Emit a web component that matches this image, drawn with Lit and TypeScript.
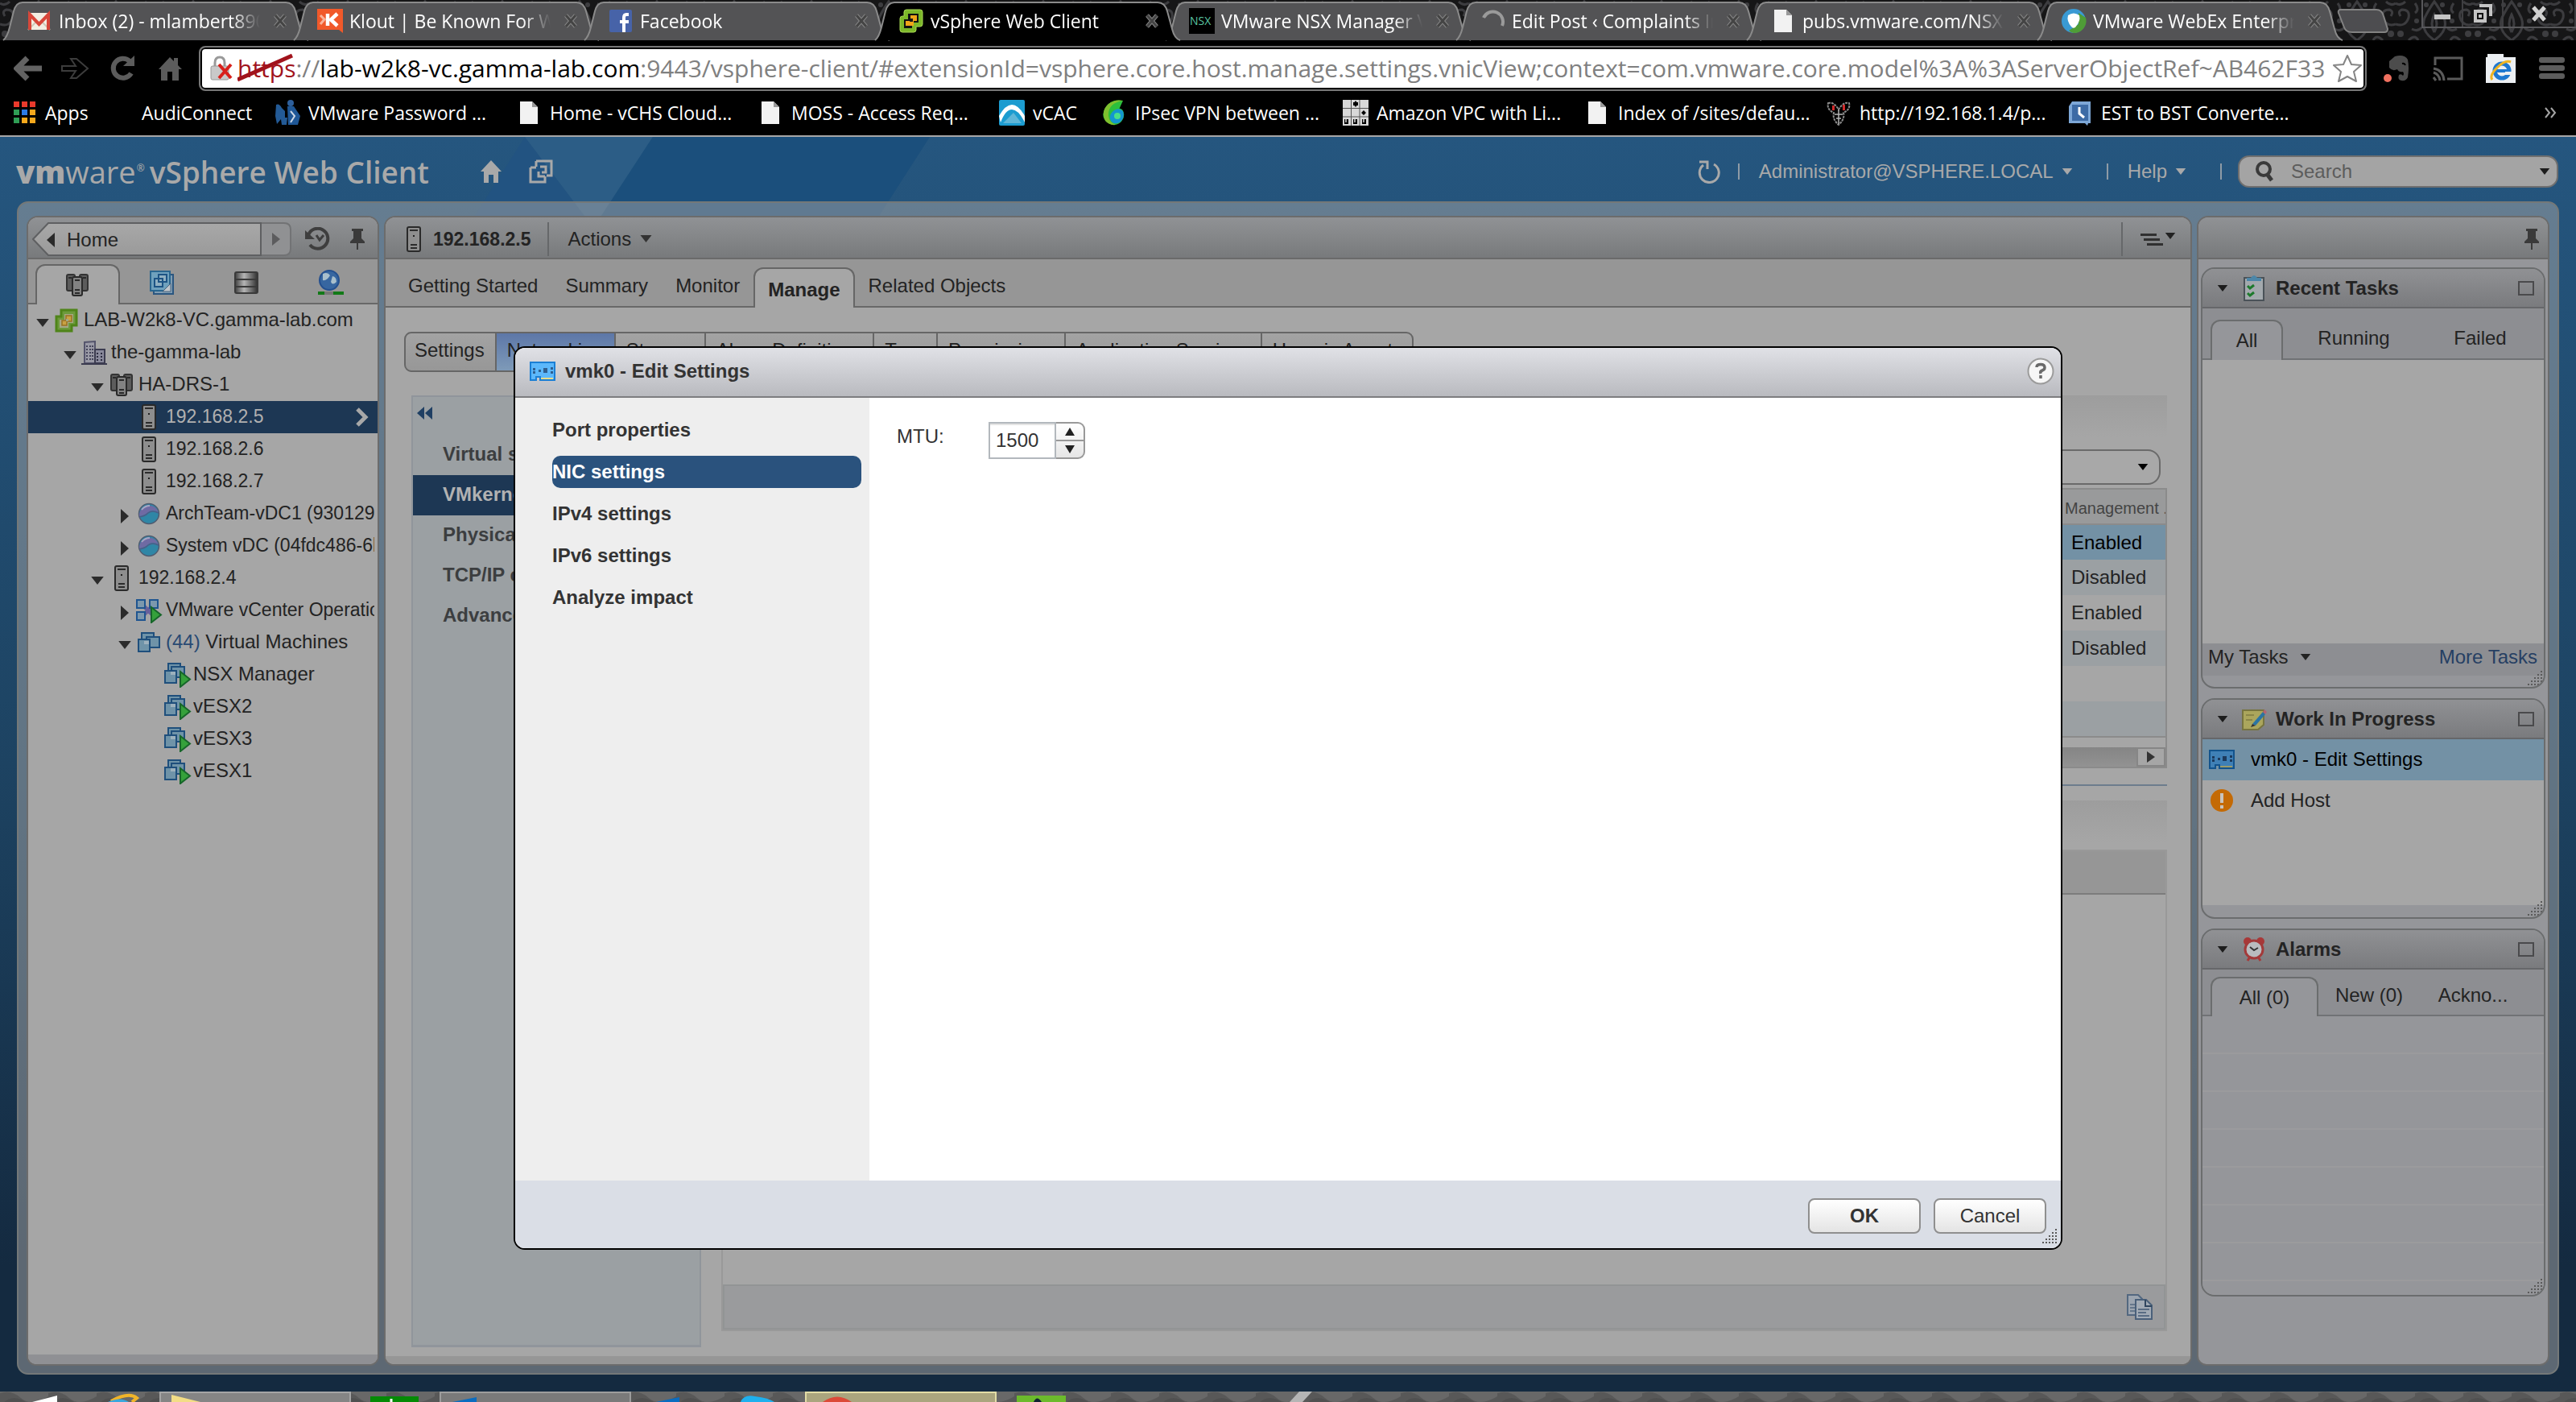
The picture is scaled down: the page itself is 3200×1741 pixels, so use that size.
import { LitElement, html, svg, css, nothing, SVGTemplateResult, TemplateResult } from "lit";
import { customElement, state } from "lit/decorators.js";
import { classMap } from "lit/directives/class-map.js";

const icon = (w: number, h: number, body: SVGTemplateResult, box = `0 0 ${w} ${h}`) =>
  html`<svg class="icon" width=${w} height=${h} viewBox=${box} aria-hidden="true">${body}</svg>`;

const caret = (w = 14, h = 9, fill = "currentColor") => icon(w, h, svg`<path d="M0 0H14L7 9Z" fill=${fill}/>`, "0 0 14 9");

/* ---------- browser icons ---------- */

const pageIcon = icon(32, 32, svg`
  <path d="M5 2H20L27 9V30H5Z" fill="#f2f2f2"/><path d="M20 2V9H27Z" fill="#9a9a9a"/>`);

const favicons: Record<string, TemplateResult> = {
  gmail: icon(32, 32, svg`
    <rect x="2" y="6" width="27" height="21" fill="#f3eee2"/><path d="M2 27L13 16M29 27L18 16" stroke="#cfc8b8" stroke-width="2"/>
    <path d="M4 27V8L15.500 20L27 8V27" fill="none" stroke="#d8473a" stroke-width="4"/>`),
  klout: icon(32, 32, svg`
    <path d="M0 1H32V31L27 27H0Z" fill="#f1592a"/>
    <path d="M4 9L9 14L4 20" fill="none" stroke="#f9b39a" stroke-width="3"/>
    <path d="M13 7V22M25 7L17 14.500L25 22" fill="none" stroke="#fff" stroke-width="4.500"/>`),
  facebook: icon(32, 32, svg`
    <rect x="2" y="2" width="28" height="28" rx="2" fill="#4763a8"/>
    <path d="M26 8H23Q20 8 20 12V30M15 17H26" fill="none" stroke="#fff" stroke-width="4"/>`),
  vsphere: icon(32, 32, svg`
    <path d="M10 2H27Q30 2 30 5V20Q30 23 27 23H22V27Q22 30 19 30H5Q2 30 2 27V13Q2 10 5 10H7V5Q7 2 10 2Z" fill="#7cb829" stroke="#a9d957" stroke-width="1"/>
    <path d="M12 7H25V18H17V25H7V14H12Z" fill="#111"/>
    <path d="M15 9H23V16H19V22H9V16H15Z" fill="#f0a519"/><path d="M15 13H18V17H14Z" fill="#1b1b1b"/>`),
  nsx: icon(32, 32, svg`
    <rect width="32" height="32" fill="#000"/>
    <text x="1" y="21" font-size="14" font-family="Open Sans, sans-serif" fill="#59c4a0">NSX</text>`),
  spinner: icon(32, 32, svg`<path d="M5 12A12 12 0 0 1 28 22" fill="none" stroke="#9a9a9a" stroke-width="4"/>`),
  page: pageIcon,
  webex: icon(32, 32, svg`
    <circle cx="16" cy="16" r="15" fill="#3a9ad4"/><path d="M16 31A15 15 0 0 0 31 12L22 6V20L10 28Q13 31 16 31Z" fill="#4f9d37"/>
    <path d="M9 9Q16 4 23 9Q25 16 18 24Q15 26 13 23Q7 16 9 9Z" fill="#fff"/>`),
  apps: icon(32, 32, svg`
    <g transform="translate(3 2)"><path d="M0 0H7V7H0ZM10 0H17V7H10ZM20 0H27V7H20Z" fill="#ea3a2c"/>
    <path d="M0 10H7V17H0ZM0 20H7V27H0Z" fill="#2f9e55"/><path d="M10 10H17V17H10Z" fill="#2c7be5"/>
    <path d="M20 10H27V17H20ZM10 20H17V27H10ZM20 20H27V27H20Z" fill="#f5a81c"/></g>`),
  blank: icon(32, 32, svg``),
  figures: icon(32, 32, svg`
    <path d="M2 6Q6 4 9 10L13 14V22H16L15 31H9L8 24L3 30L1 20Z" fill="#235a96"/>
    <circle cx="20" cy="4" r="4" fill="#2d5f9c"/><path d="M16 8H24L32 20L29 31H17Z" fill="#1f5796"/>
    <path d="M20 14L25 20L20 28" fill="none" stroke="#cdd8e6" stroke-width="2"/>`),
  vcac: icon(32, 32, svg`
    <rect width="32" height="32" rx="2" fill="#1c9cd0"/><path d="M0 20Q8 6 16 6T32 20V28Q24 12 16 12T2 28Z" fill="#fff"/>
    <path d="M5 29L18 16L28 29Z" fill="#5fb6d8"/>`),
  swirl: icon(32, 32, svg`
    <path d="M27 1Q12 -2 5 10Q-2 22 9 29Q18 34 25 27Q31 19 26 12Q20 8 16 13Q12 19 17 23" fill="#2bbf3c"/>
    <path d="M27 1Q8 4 9 20Q10 28 18 31Q10 32 5 26Q-1 14 9 5Q17 -1 27 1Z" fill="#7fc02e"/>
    <path d="M16 13Q22 9 27 14Q30 22 23 28Q14 32 11 24Q10 17 16 13Z" fill="#1496d0"/>
    <circle cx="20" cy="20" r="4" fill="#48e08a"/>`),
  grid: icon(32, 32, svg`
    <rect width="32" height="32" fill="#d8d8d8"/>
    <path d="M0 10.500H32M0 21H32M10.500 0V32M21 0V32" stroke="#555" stroke-width="1"/>
    <path d="M16 1L19 5L16 9L13 5ZM13 3H19V7H13ZM23 16L26 13L29 16L26 19Z" fill="#000"/>
    <path d="M2 24H7V30H2ZM13 24H18V30H13ZM24 24H29V30H24Z" fill="#000"/>
    <path d="M4 22V28M15 22V28M26 22V28" stroke="#d8d8d8" stroke-width="1.500"/>`),
  ornament: icon(32, 32, svg`
    <path d="M3 4Q10 2 16 12Q22 2 29 4Q31 12 22 16Q24 24 16 31Q8 24 10 16Q1 12 3 4Z" fill="none" stroke="#8a8a8a" stroke-width="2" stroke-dasharray="3 1"/>
    <path d="M16 12V30M11 18H21M13 23H19" stroke="#b5b5b5" stroke-width="1.500"/>
    <path d="M8 7H11V13H8ZM21 6H24V13H21Z" fill="#d02a2a"/>`),
  clock: icon(32, 32, svg`
    <path d="M6 2H29V29H26L25 32L22 29H2V8Z" fill="#7da7d6"/><rect x="6" y="6" width="20" height="20" fill="#3d6ba5"/>
    <path d="M15 9V17L21 22" fill="none" stroke="#fff" stroke-width="3"/>`),
};

/* ---------- inventory icons ---------- */

const hostIcon = icon(20, 34, svg`
  <rect x="2" y="2" width="16" height="30" rx="2" fill="#8e8e8e" stroke="#2a2a2a" stroke-width="2"/>
  <path d="M5 6H15M6 24H14M6 28H14" stroke="#2c2c2c" stroke-width="2"/><rect x="9" y="12" width="2" height="2" fill="#222"/>`);

const clusterIcon = icon(28, 30, svg`
  <rect x="1" y="2" width="10" height="20" rx="2" fill="#5c5c5c" stroke="#333" stroke-width="2"/>
  <rect x="17" y="2" width="10" height="20" rx="2" fill="#5c5c5c" stroke="#333" stroke-width="2"/>
  <rect x="8" y="5" width="12" height="23" rx="2" fill="#828282" stroke="#2a2a2a" stroke-width="2"/>
  <path d="M11 9H17M11 21H17M11 25H17M3 6H7M21 6H25" stroke="#2a2a2a" stroke-width="2"/>`);

const vcenterIcon = icon(30, 30, svg`
  <path d="M10 2H27V21H21V28H2V10H8V2Z" fill="#6d9a3c" stroke="#4f8419" stroke-width="3"/>
  <path d="M12 7H23V18H17V24H6V14H12Z" fill="#a5a886"/>
  <path d="M14 9H21V16H15V21H9V15H14Z" fill="#c9a244" stroke="#9a7220" stroke-width="1.500"/><path d="M14 13H17V16H14Z" fill="#a5a886"/>`);

const datacenterIcon = icon(32, 30, svg`
  <path d="M4 28V2L17 1V28Z" fill="#9a9aa6" stroke="#55556c" stroke-width="2"/>
  <path d="M17 28V11H29V28Z" fill="#8a8a9c" stroke="#3c3c50" stroke-width="2"/><path d="M0 29H32" stroke="#3c3c50" stroke-width="2"/>
  <path d="M7 6V24M11 6V24M14 6V24" stroke="#44445a" stroke-width="2" stroke-dasharray="2 2"/>
  <path d="M20 15V25M25 15V25" stroke="#2c2c40" stroke-width="2" stroke-dasharray="2 2"/>`);

const poolIcon = icon(28, 28, svg`
  <circle cx="14" cy="14" r="12.500" fill="#2f86a6" stroke="#505c70" stroke-width="1.500"/>
  <path d="M2 17Q9 16 13 12Q18 8 26 12A12.500 12.500 0 0 0 2 14Z" fill="#6f6aa3"/><path d="M2 18Q9 17 13 13Q18 9 26 13" fill="none" stroke="#4d5c86" stroke-width="1.500"/>
  <path d="M5 9Q9 4 15 4" fill="none" stroke="#a8a6c4" stroke-width="2"/>`);

const playMark = svg`<path d="M20 12L32 21.500L20 31Z" fill="#35a13b" stroke="#17662a" stroke-width="2"/>`;

const vmsIcon = icon(28, 28, svg`
  <g fill="#6f93a8" stroke="#1f4f7c" stroke-width="2"><rect x="5" y="2" width="15" height="14"/><rect x="11" y="7" width="16" height="13"/><rect x="1" y="10" width="14" height="15"/></g>
  <path d="M8 12H14V16H8Z" fill="#9db1bd"/>`);

const vmIcon = icon(34, 32, svg`
  <g fill="#6f93a8" stroke="#1f4f7c" stroke-width="2"><rect x="5" y="2" width="15" height="14"/><rect x="9" y="6" width="16" height="13"/><rect x="1" y="11" width="14" height="15"/></g>
  <path d="M8 12H14V16H8Z" fill="#9db1bd"/>${playMark}`);

const vappIcon = icon(34, 32, svg`
  <path d="M8 8L24 24M24 8L8 24" stroke="#67609b" stroke-width="5"/>
  <g fill="#7c98ad" stroke="#1f5590" stroke-width="2"><rect x="2" y="3" width="10" height="10"/><rect x="18" y="3" width="10" height="10"/><rect x="2" y="18" width="10" height="10"/></g>${playMark}`);

const templatesIcon = icon(32, 32, svg`
  <path d="M6 6H30V30H6Z" fill="#7f9cb2" stroke="#2b5680" stroke-width="2"/><path d="M2 2H26V26H2Z" fill="#6fa1bd" stroke="#2a668f" stroke-width="2"/>
  <path d="M12 6H22V15H12ZM7 11H17V21H7Z" fill="#8fb0c2" stroke="#1d5485" stroke-width="2"/><path d="M17 27L27 17V27Z" fill="#c1c6cb" stroke="#48637c"/>`);

const storageIcon = icon(30, 30, svg`
  <defs><linearGradient id="disk"><stop offset="0" stop-color="#3f3f3f"/><stop offset=".4" stop-color="#b5b5b5"/><stop offset="1" stop-color="#2f2f2f"/></linearGradient></defs>
  <rect x="1" y="2" width="28" height="26" rx="2" fill="url(#disk)" stroke="#3a3a3a" stroke-width="2"/>
  <path d="M2 11H28M2 20H28" stroke="#3a3a3a" stroke-width="2"/>`);

const networkIcon = icon(32, 32, svg`
  <circle cx="14" cy="13" r="12" fill="#3766a0" stroke="#24508f" stroke-width="2"/>
  <path d="M6 5Q12 2 15 7Q11 14 6 13ZM18 8Q23 9 23 15Q18 20 16 15Z" fill="#a9bfcc"/>
  <path d="M0 29H32" stroke="#127a17" stroke-width="4"/><path d="M8 29H19" stroke="#777" stroke-width="4"/>`);

const nicIcon = (dim: boolean) => icon(32, 24, svg`
  <path d="M1 1H31V23H13V19H8V23H1Z" fill=${dim ? "#3f80b6" : "#5cb8fb"} stroke=${dim ? "#12538c" : "#1b7fd4"} stroke-width="2"/>
  <path d="M4 8H7V11H4ZM4 12H7V15H4ZM11 10H14V13H11ZM17 8H22V14H17ZM26 7H29V10H26ZM26 12H29V15H26Z" fill=${dim ? "#1d3a5c" : "#2f5f8f"}/>
  <path d="M14 21H29" stroke=${dim ? "#9a9c6a" : "#e8dc8a"} stroke-width="2"/>`);

const pinIcon = icon(20, 28, svg`
  <path d="M3 1H17V4H15V13L19 17V19H1V17L5 13V4H3Z" fill="#3a3a3a"/><path d="M10 19V27" stroke="#3a3a3a" stroke-width="2"/>`);

const tasksIcon = icon(28, 34, svg`
  <rect x="2" y="4" width="24" height="28" fill="#a3a9ad" stroke="#4a5258" stroke-width="2"/>
  <path d="M5 8H23V4H18Q14 -2 10 4H5Z" fill="#4c86a8"/>
  <path d="M6 14L9 17L14 13M6 23L9 26L14 22" fill="none" stroke="#1d7a2c" stroke-width="3"/>`);

const notesIcon = icon(32, 30, svg`
  <path d="M2 4H28V22L21 28H2Z" fill="#aba65c" stroke="#77743f" stroke-width="2"/><path d="M6 10H16M6 16H14" stroke="#8a8648" stroke-width="2"/>
  <path d="M14 21L27 6L30 9L18 23Z" fill="#2b74a3"/><path d="M27 6L29 3L32 6L30 9Z" fill="#b56270"/><path d="M14 21L18 23L12 25Z" fill="#333"/>`);

const alarmIcon = icon(30, 32, svg`
  <circle cx="7" cy="6" r="5" fill="#a83838"/><circle cx="23" cy="6" r="5" fill="#a83838"/><path d="M7 30L10 25M23 30L20 25" stroke="#a83838" stroke-width="3"/>
  <circle cx="15" cy="16" r="11" fill="#b9bcbf" stroke="#a33a3a" stroke-width="3"/><path d="M10 13L15 17L20 14" fill="none" stroke="#333" stroke-width="2"/>`);

const warnIcon = icon(28, 28, svg`
  <circle cx="14" cy="14" r="14" fill="#c46a05"/><path d="M12 5H16V17H12ZM12 20H16V24H12Z" fill="#c9c4bd"/>`);

const grip = icon(20, 20, svg`
  <g fill="#5a5a5a"><path d="M17 1h2v2h-2zM13 5h2v2h-2zM17 5h2v2h-2zM9 9h2v2h-2zM13 9h2v2h-2zM17 9h2v2h-2zM5 13h2v2h-2zM9 13h2v2h-2zM13 13h2v2h-2zM17 13h2v2h-2zM1 17h2v2h-2zM5 17h2v2h-2zM9 17h2v2h-2zM13 17h2v2h-2zM17 17h2v2h-2z"/></g>`);

const copyIcon = icon(32, 32, svg`
  <path d="M1 1H14L19 6V26H1Z" fill="#9ca5b0" stroke="#536880" stroke-width="2"/><path d="M4 13H10M4 17H10M4 21H10" stroke="#66788c" stroke-width="2"/>
  <path d="M11 7H24L31 14V31H11Z" fill="#a2abb5" stroke="#4a607a" stroke-width="2"/><path d="M23 7V15H31" fill="none" stroke="#30465f" stroke-width="2"/>
  <path d="M14 19H28M14 23H24M14 27H28" stroke="#5a6d84" stroke-width="2"/>`);

/* ---------- data ---------- */

interface BrowserTab { icon: string; title: string; active?: boolean }
const browserTabs: BrowserTab[] = [
  { icon: "gmail", title: "Inbox (2) - mlambert890" },
  { icon: "klout", title: "Klout | Be Known For What" },
  { icon: "facebook", title: "Facebook" },
  { icon: "vsphere", title: "vSphere Web Client", active: true },
  { icon: "nsx", title: "VMware NSX Manager Vi" },
  { icon: "spinner", title: "Edit Post ‹ Complaints Inc" },
  { icon: "page", title: "pubs.vmware.com/NSX-6" },
  { icon: "webex", title: "VMware WebEx Enterprise" },
];

const bookmarks: [string, string][] = [
  ["apps", "Apps"], ["blank", "AudiConnect"], ["figures", "VMware Password ..."], ["page", "Home - vCHS Cloud..."],
  ["page", "MOSS - Access Req..."], ["vcac", "vCAC"], ["swirl", "IPsec VPN between ..."], ["grid", "Amazon VPC with Li..."],
  ["page", "Index of /sites/defau..."], ["ornament", "http://192.168.1.4/p..."], ["clock", "EST to BST Converte..."],
];

interface Node { level: number; open?: boolean; icon: TemplateResult; name: string; count?: string; selected?: boolean; snug?: boolean }
const inventory: Node[] = [
  { level: 0, open: true, icon: vcenterIcon, name: "LAB-W2k8-VC.gamma-lab.com" },
  { level: 1, open: true, icon: datacenterIcon, name: "the-gamma-lab" },
  { level: 2, open: true, icon: clusterIcon, name: "HA-DRS-1" },
  { level: 3, icon: hostIcon, name: "192.168.2.5", selected: true, snug: true },
  { level: 3, icon: hostIcon, name: "192.168.2.6", snug: true },
  { level: 3, icon: hostIcon, name: "192.168.2.7", snug: true },
  { level: 3, open: false, icon: poolIcon, name: "ArchTeam-vDC1 (930129", snug: true },
  { level: 3, open: false, icon: poolIcon, name: "System vDC (04fdc486-6b", snug: true },
  { level: 2, open: true, icon: hostIcon, name: "192.168.2.4", snug: true },
  { level: 3, open: false, icon: vappIcon, name: "VMware vCenter Operations", snug: true },
  { level: 3, open: true, icon: vmsIcon, name: "Virtual Machines", count: "(44)" },
  { level: 4, icon: vmIcon, name: "NSX Manager" },
  { level: 4, icon: vmIcon, name: "vESX2" },
  { level: 4, icon: vmIcon, name: "vESX3" },
  { level: 4, icon: vmIcon, name: "vESX1" },
];

const objectTabs = ["Getting Started", "Summary", "Monitor", "Manage", "Related Objects"];
const manageViews = ["Settings", "Networking", "Storage", "Alarm Definitions", "Tags", "Permissions", "Application Services", "Hyperic Agent"];
const networkingItems = ["Virtual switches", "VMkernel adapters", "Physical adapters", "TCP/IP configuration", "Advanced"];
const adapters: [string, string][] = [["vmk0", "Enabled"], ["vmk1", "Disabled"], ["vmk2", "Enabled"], ["vmk3", "Disabled"], ["", ""], ["", ""]];
const dialogPages = ["Port properties", "NIC settings", "IPv4 settings", "IPv6 settings", "Analyze impact"];

@customElement("app-root")
export class AppRoot extends LitElement {
  @state() private page = "NIC settings";
  @state() private mtu = 1500;

  static styles = css`
    :host { display: block; font: 24px/28px "Liberation Sans", Arial, sans-serif; color: #232323; }
    * { box-sizing: border-box; }
    button, input { font: inherit; color: inherit; background: none; border: 0; padding: 0; margin: 0; border-radius: 0; }
    button { cursor: pointer; white-space: nowrap; }
    a { color: inherit; text-decoration: none; }
    ul { list-style: none; margin: 0; padding: 0; }
    h1, h2, h3 { margin: 0; font: inherit; }
    .icon { display: block; flex: none; }
    .screen { min-height: 100vh; display: flex; flex-direction: column; background: #000; overflow: hidden; }
    .grow { flex: 1; min-width: 0; }

    /* browser */
    .browser { font-family: "Open Sans", "Noto Sans", sans-serif; color: #fff; }
    .strip { position: relative; height: 50px; display: flex; background: #161617; }
    .damask { position: absolute; inset: 0; width: 100%; height: 100%; }
    .btabs { display: flex; flex: 0 1 2904px; min-width: 0; padding-left: 4px; }
    .btab { position: relative; flex: 0 1 361px; min-width: 0; height: 50px; display: flex; align-items: center; gap: 8px; padding: 1px 7px 0 29px; font-size: 23px; }
    .btab-shape { position: absolute; left: 0; top: 2px; width: calc(100% + 18px); height: 48px; overflow: visible; }
    .btab-shape path { fill: #535355; stroke: #8b8b8b; stroke-width: 2; vector-effect: non-scaling-stroke; }
    .btab.active { z-index: 1; }
    .btab.active .btab-shape path { fill: #000; }
    .btab > .icon, .btab-title, .close { position: relative; }
    .btab-title { flex: 1; min-width: 0; margin-right: 7px; overflow: hidden; white-space: nowrap; text-align: left; line-height: 32px; mask-image: linear-gradient(90deg, #000 86%, transparent); }
    .close { width: 20px; height: 20px; }
    .newtab { position: relative; align-self: flex-start; margin-top: 10px; }
    .winbtns { position: relative; margin-left: auto; display: flex; height: 35px; border: solid #58585b; border-width: 0 0 2px 2px; }
    .winbtns button { width: 50px; display: grid; place-items: center; border-right: 2px solid #3f3f42; }
    .winbtns button:last-child { width: 90px; }
    .bar { height: 63px; display: flex; align-items: center; padding: 7px 14px 0 17px; background: #000; }
    .bar nav { display: flex; gap: 23px; width: 230px; }
    .omni { flex: 1; min-width: 0; height: 56px; display: flex; align-items: center; gap: 6px; padding: 0 4px 0 12px; border: 2px solid #777; outline: 2px solid #000; outline-offset: -4px; border-radius: 8px; background: #fff; color: #808080; font-size: 30px; line-height: 44px; }
    .url { flex: 1; min-width: 0; overflow: hidden; white-space: nowrap; }
    .scheme { position: relative; display: inline-block; color: #a1131c; }
    .slash { position: absolute; left: -2px; top: 2px; width: 74px; height: 38px; }
    .domain { color: #000; }
    .exts { display: flex; align-items: center; gap: 28px; padding-left: 20px; }
    .marks { height: 57px; display: grid; grid-template-columns: 120px 207px 300px 300px 300px 127px 300px 300px 300px 300px 300px 1fr; align-items: center; padding: 0 24px 2px 14px; border-bottom: 2px solid #a7a7a7; font-size: 23px; }
    .mark { display: flex; align-items: center; gap: 10px; min-width: 0; white-space: nowrap; overflow: hidden; }
    .more { justify-self: end; }

    /* vSphere client */
    .client { position: relative; flex: 1; display: flex; flex-direction: column; background: linear-gradient(#25567f, #1d4362 50%, #142a40 90%); }
    .facets { position: absolute; inset: 0 auto auto 0; width: 1400px; height: 98px; }
    .top { position: relative; height: 80px; display: flex; align-items: center; padding: 6px 22px 0 20px; color: #a9a9a9; }
    .brand { display: flex; align-items: baseline; font: 600 37px/44px "Open Sans", sans-serif; }
    .brand .vm { font-weight: 800; font-size: 38px; }
    .brand .ware { font-weight: 400; font-size: 38px; }
    .brand sup { font-size: 12px; line-height: 12px; align-self: flex-start; padding: 12px 6px 0 1px; }
    .top-links { display: flex; gap: 34px; padding-left: 64px; }
    .session { display: flex; align-items: center; margin-left: auto; }
    .session button { display: flex; align-items: center; gap: 10px; }
    .rule { width: 2px; height: 20px; background: #8f9ba6; margin: 0 24px 0 22px; }
    .rule.far { margin-left: 42px; }
    .search { display: flex; align-items: center; width: 398px; height: 40px; gap: 22px; padding: 0 8px 0 18px; border: 2px solid #6f6f6f; border-radius: 14px; background: #a4a4a4; color: #303030; margin-left: -4px; }
    .search input { flex: 1; min-width: 0; outline: 0; }
    .search input::placeholder { color: #5c5c5c; opacity: 1; }

    .frame { position: relative; flex: 1; display: grid; grid-template-columns: 438px minmax(0, 1fr) 438px; gap: 6px; margin: 0 21px 21px; padding: 16px 10px 9px; border: 2px solid #747878; border-radius: 14px; background: rgba(165, 165, 165, 0.5); }
    .panel { display: flex; flex-direction: column; min-width: 0; border: 2px solid #6c6c6c; border-radius: 14px 14px 12px 12px; background: #a6a6a6; overflow: hidden; }
    .phead { flex: none; height: 52px; display: flex; align-items: center; padding-top: 3px; border-bottom: 2px solid #6a6a6a; background: linear-gradient(#909295, #787a7c); }
    .pfoot { flex: none; height: 12px; margin-top: auto; background: #8f9094; }
    main .pfoot { height: 10px; background: #969696; }
    .tabs { display: flex; align-items: flex-end; border-bottom: 2px solid #686868; background: #969696; }
    .tab.active { margin-bottom: -2px; border: 2px solid #666; border-bottom: 0; border-radius: 12px 12px 0 0; background: #a6a6a6; }

    .crumb { position: relative; display: flex; align-items: center; width: 322px; height: 42px; margin-left: 5px; }
    .crumb-shape { position: absolute; inset: 0; width: 322px; height: 42px; }
    .crumb button { position: relative; display: flex; align-items: center; gap: 15px; }
    .crumb .home { width: 284px; padding: 2px 0 0 18px; }
    .crumb .next { width: 38px; justify-content: center; }
    .tools { display: flex; align-items: center; gap: 22px; padding-left: 16px; }
    .inv-tabs { height: 56px; padding-left: 9px; }
    .inv-tabs .tab { width: 105px; height: 50px; display: grid; place-items: center; padding-right: 2px; }
    .row { height: 40px; display: flex; align-items: center; gap: 6px; white-space: nowrap; overflow: hidden; margin-right: 4px; }
    .lv0 { padding-left: 9px; } .lv1 { padding-left: 43px; } .lv2 { padding-left: 77px; } .lv3 { padding-left: 111px; } .lv4 { padding-left: 145px; }
    .row.selected { background: #1d3754; color: #b0b0b0; margin-right: 0; padding-right: 10px; }
    .twist { flex: none; width: 18px; display: grid; place-items: center; padding-top: 6px; color: #2b2b2b; }
    .slot { flex: none; width: 30px; height: 32px; display: flex; align-items: center; justify-content: center; }
    .lv4 .slot { justify-content: flex-start; }
    .name { display: block; overflow: hidden; padding-bottom: 3px; }
    .snug { font-size: 23px; }
    .count { color: #294a73; }
    .chev { margin-left: auto; }

    .title { font-weight: bold; font-size: 24px; }
    .host { gap: 14px; padding-left: 25px; }
    .host .title { font-size: 23px; padding-right: 6px; }
    .vline { width: 2px; height: 42px; background: #66686a; }
    .actions { display: flex; align-items: center; gap: 11px; padding-left: 10px; }
    .listbtn { display: flex; align-items: flex-start; gap: 2px; padding: 0 18px 0 8px; }
    .obj-tabs { height: 60px; padding-left: 11px; }
    .obj-tabs .tab { height: 50px; padding: 0 17px; }
    .obj-tabs .tab.active { padding: 4px 16px 0; font-weight: bold; }
    .segs { display: flex; align-self: flex-start; margin: 30px 0 0 23px; height: 50px; border: 2px solid #666; border-radius: 9px; background: linear-gradient(#a3a3a3, #979797); overflow: hidden; }
    .segs button { padding: 0 13px 4px; border-left: 2px solid #666; }
    .segs button:first-child { border-left: 0; padding-left: 11px; }
    .segs button:last-child { padding-right: 24px; }
    .segs .on { background: linear-gradient(#5d77a8, #7e9ab8); }
    .work { flex: 1; display: grid; grid-template-columns: 360px minmax(0, 1fr); gap: 25px; padding: 29px 29px 11px 32px; }
    .subnav { border: 2px solid #90959b; border-bottom-width: 3px; background: #9ba0a3; font-weight: bold; color: #3c3e40; }
    .subnav .fold { display: block; padding: 0 0 7px 5px; height: 47px; color: #1f3f63; }
    .subnav li button { display: block; width: 100%; height: 50px; text-align: left; padding: 0 0 3px 37px; }
    .subnav .on { background: #1d3754; color: #b2b2b2; }
    .detail { display: flex; flex-direction: column; padding-bottom: 20px; }
    .fade { flex: none; height: 52px; background: linear-gradient(#9d9d9d, #a6a6a6); }
    .filter { align-self: flex-end; display: flex; align-items: center; width: 420px; height: 44px; margin: 15px 8px 4px; padding: 0 12px; border: 2px solid #6a6a6a; border-radius: 16px; background: #a8a8a8; color: #000; }
    .filter input { flex: 1; min-width: 0; }
    .grid { width: 100%; table-layout: fixed; border-collapse: collapse; border: 2px solid #8b8b8b; }
    .grid th { height: 44px; padding: 3px 0 0 6px; font-weight: normal; font-size: 20px; text-align: left; white-space: nowrap; overflow: hidden; color: #444; background: #999a9b; border-bottom: 2px solid #8b8b8b; }
    .grid td { height: 44px; padding: 0 0 0 14px; }
    .grid th:last-child { width: 132px; }
    .grid tr:nth-child(even) td { background: #9ba0a3; }
    .grid tr.on td { background: #7391a5; color: #000; }
    .hscroll { height: 38px; padding-top: 12px; border: solid #8b8b8b; border-width: 0 2px 2px; display: flex; justify-content: flex-end; background: linear-gradient(#a6a6a6 12px, #858585 12px, #929292); }
    .hscroll button { width: 36px; display: grid; place-items: center; background: #a6a6a6; border: 2px solid #868686; }
    .detail hr { width: 100%; height: 2px; border: 0; margin: 20px 0 18px; background: #6d7d8d; }
    .props { flex: 1; display: flex; flex-direction: column; margin-top: 9px; border: 2px solid #999; }
    .props-head { height: 54px; background: #969696; border-bottom: 2px solid #7c7c7c; }
    .props-foot { margin-top: auto; height: 56px; display: flex; align-items: center; justify-content: flex-end; padding-right: 14px; border: 2px solid #929495; background: #9a9b9d; }

    .side { background: #95969a; }
    .side .phead { justify-content: flex-end; padding-right: 10px; }
    .cards { display: flex; flex-direction: column; gap: 12px; padding: 10px 3px; }
    .card { position: relative; display: flex; flex-direction: column; border: 2px solid #6b6d6e; border-radius: 17px; background: #95969a; overflow: hidden; }
    .chead { flex: none; height: 49px; display: flex; align-items: center; border-bottom: 2px solid #66676a; background: linear-gradient(#909194, #7a7b7e); padding: 0 12px 0 18px; }
    .chead .slot { width: 34px; margin: 0 10px 0 15px; }
    .card .tabs { background: #8d8e92; border-color: #707275; }
    .card .tab.active { background: #95969a; border-color: #6b6d6e; }
    .card .grip { position: absolute; right: 1px; bottom: 1px; }
    .t-tabs { height: 64px; padding-left: 10px; }
    .t-tabs .tab { height: 50px; }
    .t-tabs .all { width: 90px; } .t-tabs .running { width: 176px; } .t-tabs .failed { width: 138px; }
    .t-body { height: 352px; background: #a6a6a6; }
    .t-foot { height: 40px; margin-bottom: 14px; display: flex; align-items: center; justify-content: space-between; padding: 0 8px 6px 7px; background: #8d8e92; }
    .t-foot button { display: flex; align-items: center; gap: 14px; }
    .t-foot a { color: #263f63; }
    .w-body { height: 206px; margin-bottom: 15px; background: #a6a6a6; }
    .w-body a { display: flex; align-items: center; gap: 20px; height: 51px; padding: 0 0 2px 8px; }
    .w-body .slot { width: 32px; }
    .w-body .on { background: #7391a5; color: #000; }
    .a-tabs { height: 58px; padding-left: 10px; }
    .a-tabs .tab { height: 49px; }
    .a-tabs .all { width: 134px; } .a-tabs .new { width: 126px; } .a-tabs .ack { width: 132px; }
    .a-body { height: 346px; background: repeating-linear-gradient(#95969a 0 45px, #9b9b9d 45px 47px); }

    /* dialog */
    .modal { position: absolute; inset: 0; display: flex; justify-content: center; align-items: flex-start; padding-top: 260px; }
    .dialog { display: flex; flex-direction: column; width: 1924px; max-width: 90%; height: 1122px; border: 2px solid #000; border-radius: 14px; background: #fff; color: #333; overflow: hidden; }
    .dhead { height: 62px; display: flex; align-items: center; gap: 12px; padding: 0 8px 2px 18px; border-bottom: 2px solid #7d7d80; background: linear-gradient(#e0e1e6, #b9babf); }
    .dhead .title { flex: 1; }
    .dbody { flex: 1; display: grid; grid-template-columns: 440px 1fr; }
    .pages { display: flex; flex-direction: column; gap: 12px; padding: 20px 10px 20px 46px; background: #eee; font-weight: bold; }
    .pages button { display: block; width: 100%; height: 40px; text-align: left; border-radius: 10px; }
    .pages .on { background: #2a527d; color: #fff; }
    .form { display: flex; align-items: flex-start; padding: 30px 34px; }
    .form label { width: 114px; padding-top: 4px; }
    .num { width: 84px; height: 46px; padding-left: 7px; border: 2px solid #b3b8bd; background: #fff; box-shadow: inset 0 2px 0 #e4e4e4; }
    .spin { display: flex; flex-direction: column; width: 36px; height: 46px; border: 2px solid #999; border-left: 0; border-radius: 0 9px 9px 0; background: linear-gradient(#fff, #e6e6e6); }
    .spin button { flex: 1; display: grid; place-items: center; }
    .spin button + button { border-top: 2px solid #999; }
    .dfoot { position: relative; height: 84px; display: flex; justify-content: flex-end; align-items: center; gap: 16px; padding: 4px 18px 0; background: #dadee6; }
    .btn { width: 140px; height: 44px; border: 2px solid #8f8f8f; border-radius: 8px; background: linear-gradient(#fff, #e4e4e4); }
    .btn.ok { font-weight: bold; }
    .dfoot .grip { position: absolute; right: 4px; bottom: 5px; }

    .taskbar { flex: none; height: 13px; position: relative; overflow: hidden; background: #585858; }
    .taskbar svg { display: block; }
  `;

  private browser() {
    const close = icon(20, 20, svg`<path d="M4 3L16 17M16 3L4 17" stroke="#858585" stroke-width="5"/><path d="M4 3L16 17M16 3L4 17" stroke="#444" stroke-width="3"/>`);
    return html`<header class="browser">
      <div class="strip">
        <svg class="damask" aria-hidden="true">
          <defs><pattern id="dm" width="96" height="50" patternUnits="userSpaceOnUse">
            <g fill="none" stroke="#3c3c3f" stroke-width="3">
              <path d="M48 50Q30 38 36 22Q42 10 48 2Q54 10 60 22Q66 38 48 50M48 40Q42 30 48 18Q54 30 48 40"/>
              <path d="M0 30Q12 34 16 22Q18 12 8 12Q2 14 6 20M96 30Q84 34 80 22Q78 12 88 12Q94 14 90 20"/>
              <path d="M16 50Q24 42 28 50M80 50Q72 42 68 50M24 4Q30 12 24 16M72 4Q66 12 72 16"/>
              <path d="M20 36Q28 40 32 34M76 36Q68 40 64 34M0 4Q6 8 12 2M96 4Q90 8 84 2"/></g>
            <g fill="#3d3d40"><circle cx="6" cy="42" r="4"/><circle cx="90" cy="42" r="4"/><circle cx="26" cy="26" r="3"/><circle cx="70" cy="26" r="3"/><circle cx="38" cy="6" r="3"/><circle cx="58" cy="6" r="3"/></g>
          </pattern></defs>
          <rect width="100%" height="100%" fill="url(#dm)"/>
        </svg>
        <div class="btabs" role="tablist" aria-label="Browser tabs">
          ${browserTabs.map((t) => html`<div class=${classMap({ btab: true, active: !!t.active })} role="tab" aria-selected=${t.active ? "true" : "false"}>
            <svg class="btab-shape" viewBox="0 0 380 48" preserveAspectRatio="none" aria-hidden="true">
              <path d="M0 48Q5 44 8 32L13 12Q16 1 24 1H352Q361 1 364 12L370 34Q373 46 380 48"/></svg>
            ${favicons[t.icon]}<span class="btab-title">${t.title}</span><button class="close" aria-label="Close tab">${close}</button>
          </div>`)}
        </div>
        <button class="newtab" aria-label="New tab">${icon(64, 32, svg`<path d="M2 2H48Q55 2 57 10L62 26Q62 30 58 30H18Q10 30 8 24L1 6Q0 2 4 2Z" fill="#4d4d50" stroke="#828282" stroke-width="2"/>`)}</button>
        <div class="winbtns">
          <button aria-label="Minimize">${icon(20, 20, svg`<path d="M0 11H20V17H0Z" fill="#c4c4c4"/>`)}</button>
          <button aria-label="Restore">${icon(24, 24, svg`<path d="M8 2H22V15" fill="none" stroke="#c4c4c4" stroke-width="4"/><path d="M3 9H15V21H3Z" fill="#111" stroke="#c4c4c4" stroke-width="4"/><rect x="7" y="13" width="4" height="4" fill="#c4c4c4"/>`)}</button>
          <button aria-label="Close">${icon(20, 20, svg`<path d="M3 2L17 18M17 2L3 18" stroke="#d0d0d0" stroke-width="5"/>`)}</button>
        </div>
      </div>
      <div class="bar">
        <nav aria-label="Browser navigation">
          <button aria-label="Back">${icon(36, 32, svg`<path d="M17 3L4 16L17 29M5 16H35" fill="none" stroke="#636363" stroke-width="7"/>`)}</button>
          <button aria-label="Forward">${icon(36, 32, svg`<path d="M1 13H18L12 4H19L33 16L19 28H12L18 19H1Z" fill="#000" stroke="#3c3c3c" stroke-width="2"/>`)}</button>
          <button aria-label="Reload">${icon(36, 32, svg`<path d="M28 22A12 12 0 1 1 26 7" fill="none" stroke="#5c5c5c" stroke-width="6"/><path d="M18 13H32V0Z" fill="#5c5c5c"/>`)}</button>
          <button aria-label="Home page">${icon(36, 32, svg`<path d="M3 17L17 2L22 7V3H27V12L32 17H28V31H20V20H14V31H6V17Z" fill="#5c5c5c"/>`)}</button>
        </nav>
        <div class="omni">
          ${icon(28, 32, svg`<path d="M6 14V9Q6 2 12 2T18 9V14" fill="none" stroke="#9a9a9a" stroke-width="3"/><rect x="1" y="13" width="22" height="17" rx="2" fill="#c9c9c9" stroke="#999"/><path d="M11 11L26 28M26 11L11 28" stroke="#d8201b" stroke-width="4"/>`)}
          <div class="url"><span class="scheme">https<svg class="slash" viewBox="0 0 74 38" aria-hidden="true"><path d="M2 34L70 4" stroke="#a1131c" stroke-width="5"/></svg></span>://<span class="domain">lab-w2k8-vc.gamma-lab.com</span>:9443/vsphere-client/#extensionId=vsphere.core.host.manage.settings.vnicView;context=com.vmware.core.model%3A%3AServerObjectRef~AB462F33</div>
          <button aria-label="Bookmark this page">${icon(36, 36, svg`<path d="M18 2L23 13L35 14L26 22L29 34L18 28L7 34L10 22L1 14L13 13Z" fill="#fff" stroke="#848484" stroke-width="2" stroke-linejoin="round"/>`)}</button>
        </div>
        <div class="exts">
          <button aria-label="Evernote">${icon(34, 36, svg`<path d="M8 9L15 3Q27 0 31 7Q33 17 31 29Q29 34 23 33Q18 32 20 26Q23 24 25 27Q27 25 25 22Q20 23 18 19Q12 22 8 17Z" fill="#4c4c4c"/><path d="M24 12Q27 11 28 14" fill="none" stroke="#000" stroke-width="2"/><circle cx="6" cy="30" r="5" fill="#f0705f"/>`)}</button>
          <button aria-label="Cast">${icon(38, 32, svg`<path d="M3 12V3H36V29H18" fill="none" stroke="#5a5a5a" stroke-width="3"/><path d="M1 16Q13 18 14 31M1 21Q8 23 9 31M1 27L4 31" fill="none" stroke="#5a5a5a" stroke-width="3"/>`)}</button>
          <button aria-label="IE Tab">${icon(38, 38, svg`<path d="M2 1H22V5H37V37H0V5H2Z" fill="#eceff2"/><circle cx="20" cy="22" r="9" fill="none" stroke="#1e78d0" stroke-width="5"/><path d="M12 22H28" stroke="#1e78d0" stroke-width="4"/><path d="M24 25H32" stroke="#eceff2" stroke-width="4"/><path d="M8 33Q4 28 14 18T31 11" fill="none" stroke="#eeb422" stroke-width="3"/>`)}</button>
          <button aria-label="Menu">${icon(32, 32, svg`<g fill="#5c5c5c"><rect y="2" width="32" height="7" rx="3"/><rect y="12" width="32" height="7" rx="3"/><rect y="22" width="32" height="7" rx="3"/></g>`)}</button>
        </div>
      </div>
      <nav class="marks" aria-label="Bookmarks">
        ${bookmarks.map(([i, t]) => html`<a class="mark" href="#">${favicons[i]}<span>${t}</span></a>`)}
        <button class="more" aria-label="More bookmarks">${icon(16, 16, svg`<path d="M2 2L7 8L2 14M9 2L14 8L9 14" fill="none" stroke="#a5a5a5" stroke-width="2"/>`)}</button>
      </nav>
    </header>`;
  }

  private top() {
    return html`<header class="top">
      <h1 class="brand"><span class="vm">vm</span><span class="ware">ware</span><sup>®</sup><span>vSphere Web Client</span></h1>
      <nav class="top-links">
        <a href="#" aria-label="Home">${icon(26, 30, svg`<path d="M13 1L26 15H22V29H16V19H10V29H4V15H0Z" fill="#a9a9a9"/>`)}</a>
        <a href="#" aria-label="Links">${icon(30, 30, svg`<g fill="none" stroke="#a9a9a9" stroke-width="3"><path d="M9 2H28V20H22M9 2V9M2 10H9M2 10V28H20V21M20 21H12V15M14 9H21V16H16"/></g>`)}</a>
      </nav>
      <div class="session">
        <button aria-label="Refresh">${icon(28, 30, svg`<path d="M20 6A12 12 0 1 1 7 7" fill="none" stroke="#a9a9a9" stroke-width="3"/><path d="M2 3H12V12" fill="none" stroke="#a9a9a9" stroke-width="3"/>`)}</button>
        <span class="rule"></span>
        <button>Administrator@VSPHERE.LOCAL ${caret(14, 8)}</button>
        <span class="rule far"></span>
        <button>Help ${caret(14, 8)}</button>
        <span class="rule far"></span>
        <div class="search">${icon(24, 26, svg`<circle cx="12" cy="10" r="8" fill="none" stroke="#3a3a3a" stroke-width="4"/><path d="M16 16L22 24" stroke="#3a3a3a" stroke-width="5"/>`)}
          <input type="search" placeholder="Search" aria-label="Search">${caret(14, 8, "#1c1c1c")}</div>
      </div>
    </header>`;
  }

  private navigator() {
    return html`<aside class="panel" aria-label="Navigator">
      <div class="phead">
        <div class="crumb">
          <svg class="crumb-shape" viewBox="0 0 322 42" aria-hidden="true">
            <defs><linearGradient id="cr" x2="0" y2="1"><stop offset="0" stop-color="#a8a8a8"/><stop offset="1" stop-color="#9a9a9a"/></linearGradient></defs>
            <path d="M284 1H313Q321 1 321 9V33Q321 41 313 41H284" fill="#909193" stroke="#727375" stroke-width="2"/>
            <path d="M20 1H284V41H20L1 21Z" fill="url(#cr)" stroke="#5f6062" stroke-width="2"/></svg>
          <button class="home">${icon(10, 18, svg`<path d="M10 0V18L0 9Z" fill="#2a2a2a"/>`)}Home</button>
          <button class="next" aria-label="Forward">${icon(10, 16, svg`<path d="M0 0V16L10 8Z" fill="#5c5c5e"/>`)}</button>
        </div>
        <div class="tools">
          <button aria-label="History">${icon(34, 30, svg`<path d="M5 10A12.500 12.500 0 1 1 7 22" fill="none" stroke="#3e3e3e" stroke-width="4"/><path d="M1 4V15H13Z" fill="#3e3e3e"/><path d="M15 10L19 16L24 10" fill="none" stroke="#3e3e3e" stroke-width="3"/>`)}</button>
          <button aria-label="Pin">${pinIcon}</button>
        </div>
      </div>
      <div class="tabs inv-tabs" role="tablist">
        <button class="tab active" role="tab" aria-label="Hosts and Clusters">${clusterIcon}</button>
        <button class="tab" role="tab" aria-label="VMs and Templates">${templatesIcon}</button>
        <button class="tab" role="tab" aria-label="Storage">${storageIcon}</button>
        <button class="tab" role="tab" aria-label="Networking">${networkIcon}</button>
      </div>
      <ul role="tree">
        ${inventory.map((n) => html`<li role="treeitem" aria-selected=${n.selected ? "true" : "false"} class="row lv${n.level} ${n.selected ? "selected" : ""}">
          <span class="twist">${n.open === undefined ? nothing : n.open ? caret(18, 10) : icon(10, 18, svg`<path d="M0 0V18L10 9Z" fill="#2b2b2b"/>`)}</span>
          <span class="slot">${n.icon}</span>
          <span class=${classMap({ name: true, snug: !!n.snug })}>${n.count ? html`<span class="count">${n.count}</span> ` : nothing}${n.name}</span>
          ${n.selected ? html`<span class="chev">${icon(18, 24, svg`<path d="M3 2L13 12L3 22" fill="none" stroke="#a8a8a8" stroke-width="5"/>`)}</span>` : nothing}
        </li>`)}
      </ul>
      <div class="pfoot"></div>
    </aside>`;
  }

  private main() {
    return html`<main class="panel">
      <div class="phead host">${hostIcon}<h2 class="title">192.168.2.5</h2>
        <span class="vline"></span>
        <button class="actions">Actions ${caret(15, 9, "#333")}</button>
        <span class="grow"></span><span class="vline"></span>
        <button class="listbtn" aria-label="View options">${icon(28, 16, svg`<path d="M0 1H20V4H0ZM4 7H24V10H4ZM8 13H28V16H8Z" fill="#303030"/>`)}${caret(14, 8, "#222")}</button>
      </div>
      <div class="tabs obj-tabs" role="tablist">
        ${objectTabs.map((t) => html`<button role="tab" class=${classMap({ tab: true, active: t === "Manage" })}>${t}</button>`)}
      </div>
      <div class="segs">${manageViews.map((t) => html`<button class=${classMap({ on: t === "Networking" })}>${t}</button>`)}</div>
      <div class="work">
        <nav class="subnav">
          <button class="fold" aria-label="Collapse">${icon(20, 16, svg`<path d="M9 0V16L0 8ZM19 0V16L10 8Z" fill="currentColor"/>`)}</button>
          <ul>${networkingItems.map((t) => html`<li><button class=${classMap({ on: t === "VMkernel adapters" })}>${t}</button></li>`)}</ul>
        </nav>
        <section class="detail">
          <div class="fade"></div>
          <div class="filter"><input type="text" aria-label="Filter">${caret(16, 8)}</div>
          <table class="grid">
            <thead><tr><th>Device</th><th>Management ...</th></tr></thead>
            <tbody>${adapters.map(([d, m], i) => html`<tr class=${i === 0 ? "on" : ""}><td>${d}</td><td>${m}</td></tr>`)}</tbody>
          </table>
          <div class="hscroll"><button aria-label="Scroll right">${icon(10, 14, svg`<path d="M0 0V14L10 7Z" fill="#333"/>`)}</button></div>
          <hr>
          <div class="fade"></div>
          <div class="props"><div class="props-head"></div><div class="props-foot"><button aria-label="Copy">${copyIcon}</button></div></div>
        </section>
      </div>
      <div class="pfoot"></div>
    </main>`;
  }

  private card(name: string, pic: TemplateResult, body: TemplateResult) {
    return html`<section class="card">
      <div class="chead">${caret(14, 8, "#1c1c1c")}<span class="slot">${pic}</span><h3 class="title grow">${name}</h3>
        <button aria-label="Maximize ${name}">${icon(20, 18, svg`<rect x="1" y="1" width="18" height="16" fill="none" stroke="#4a4a4c" stroke-width="2"/>`)}</button></div>
      ${body}<span class="grip">${grip}</span>
    </section>`;
  }

  private side() {
    return html`<aside class="panel side">
      <div class="phead"><button aria-label="Pin sidebar">${pinIcon}</button></div>
      <div class="cards">
        ${this.card("Recent Tasks", tasksIcon, html`
          <div class="tabs t-tabs" role="tablist"><button class="tab all active" role="tab">All</button><button class="tab running" role="tab">Running</button><button class="tab failed" role="tab">Failed</button></div>
          <div class="t-body"></div>
          <div class="t-foot"><button>My Tasks ${caret(14, 8)}</button><a href="#">More Tasks</a></div>`)}
        ${this.card("Work In Progress", notesIcon, html`
          <div class="w-body"><a class="on" href="#"><span class="slot">${nicIcon(true)}</span>vmk0 - Edit Settings</a>
          <a href="#"><span class="slot">${warnIcon}</span>Add Host</a></div>`)}
        ${this.card("Alarms", alarmIcon, html`
          <div class="tabs a-tabs" role="tablist"><button class="tab all active" role="tab">All (0)</button><button class="tab new" role="tab">New (0)</button><button class="tab ack" role="tab">Ackno...</button></div>
          <div class="a-body"></div>`)}
      </div>
    </aside>`;
  }

  private dialog() {
    return html`<div class="modal"><section class="dialog" role="dialog" aria-labelledby="dlg">
      <div class="dhead">${nicIcon(false)}<h2 class="title" id="dlg">vmk0 - Edit Settings</h2>
        <button aria-label="Help">${icon(34, 34, svg`<circle cx="17" cy="17" r="15.500" fill="#f6f6f6" stroke="#9b9b9b" stroke-width="2"/><path d="M12 12Q12 8.500 17 8.500T22 12.500Q22 15 19 16T17 20M17 22V26" fill="none" stroke="#6a6a6a" stroke-width="3.500"/>`)}</button></div>
      <div class="dbody">
        <nav class="pages">${dialogPages.map((p) => html`<button class=${classMap({ on: p === this.page })} @click=${() => (this.page = p)}>${p}</button>`)}</nav>
        <div class="form"><label for="mtu">MTU:</label>
          <input id="mtu" class="num" type="text" inputmode="numeric" .value=${String(this.mtu)}>
          <span class="spin">
            <button aria-label="Increase" @click=${() => this.mtu++}>${icon(12, 10, svg`<path d="M0 10H12L6 0Z" fill="#222"/>`)}</button>
            <button aria-label="Decrease" @click=${() => this.mtu--}>${icon(12, 10, svg`<path d="M0 0H12L6 10Z" fill="#222"/>`)}</button>
          </span></div>
      </div>
      <div class="dfoot"><button class="btn ok">OK</button><button class="btn">Cancel</button><span class="grip">${grip}</span></div>
    </section></div>`;
  }

  render() {
    return html`<div class="screen">
      ${this.browser()}
      <div class="client">
        <svg class="facets" viewBox="0 0 1400 98" aria-hidden="true">
          <path d="M652 0L590 98H726Z" fill="#225381"/><path d="M652 0H811L747 98H726Z" fill="#2c5d86"/>
          <path d="M811 0H1155L1092 98H747Z" fill="#1b4f7c"/></svg>
        ${this.top()}
        <div class="frame">${this.navigator()}${this.main()}${this.side()}</div>
        ${this.dialog()}
      </div>
      <footer class="taskbar">
        <svg width="100%" height="13" aria-hidden="true">
          <defs><pattern id="tb" width="60" height="14" patternUnits="userSpaceOnUse"><path d="M0 2Q14 -3 26 8T60 6V0H0Z" fill="#686868"/><path d="M4 14Q16 2 34 14Z" fill="#505050"/></pattern></defs>
          <rect width="100%" height="13" fill="url(#tb)"/>
          <path d="M40 13L71 5V13Z" fill="#fff"/><path d="M138 12Q160 0 170 8L164 13" fill="none" stroke="#f0b429" stroke-width="4"/><path d="M134 13Q150 6 160 13Z" fill="#3ba7dd"/>
          <rect x="199" y="1" width="236" height="14" fill="#858585" stroke="#a5a5a5" stroke-width="2"/><path d="M213 4L249 13H213Z" fill="#f3dd86"/>
          <rect x="460" y="6" width="60" height="8" fill="#058a05"/><path d="M486 9V13" stroke="#fff" stroke-width="3"/>
          <rect x="547" y="1" width="236" height="14" fill="#7a7a7a" stroke="#9d9d9d" stroke-width="2"/><path d="M562 13L592 7V13ZM815 13L844 7V13Z" fill="#0a6cc0"/>
          <path d="M920 13Q924 3 938 6Q955 8 962 13Z" fill="#1fb0ee"/>
          <rect x="1001" y="1" width="236" height="14" fill="#aaa57e" stroke="#e2dca6" stroke-width="2"/><path d="M1022 13Q1040 0 1058 13Z" fill="#dc4a38"/>
          <rect x="1263" y="5" width="61" height="10" fill="#6cba2c"/><path d="M1284 13Q1288 4 1294 13Z" fill="#123"/>
          <path d="M1602 13L1614 0H1630L1618 13Z" fill="#b5b5b5"/>
        </svg>
      </footer>
    </div>`;
  }
}
